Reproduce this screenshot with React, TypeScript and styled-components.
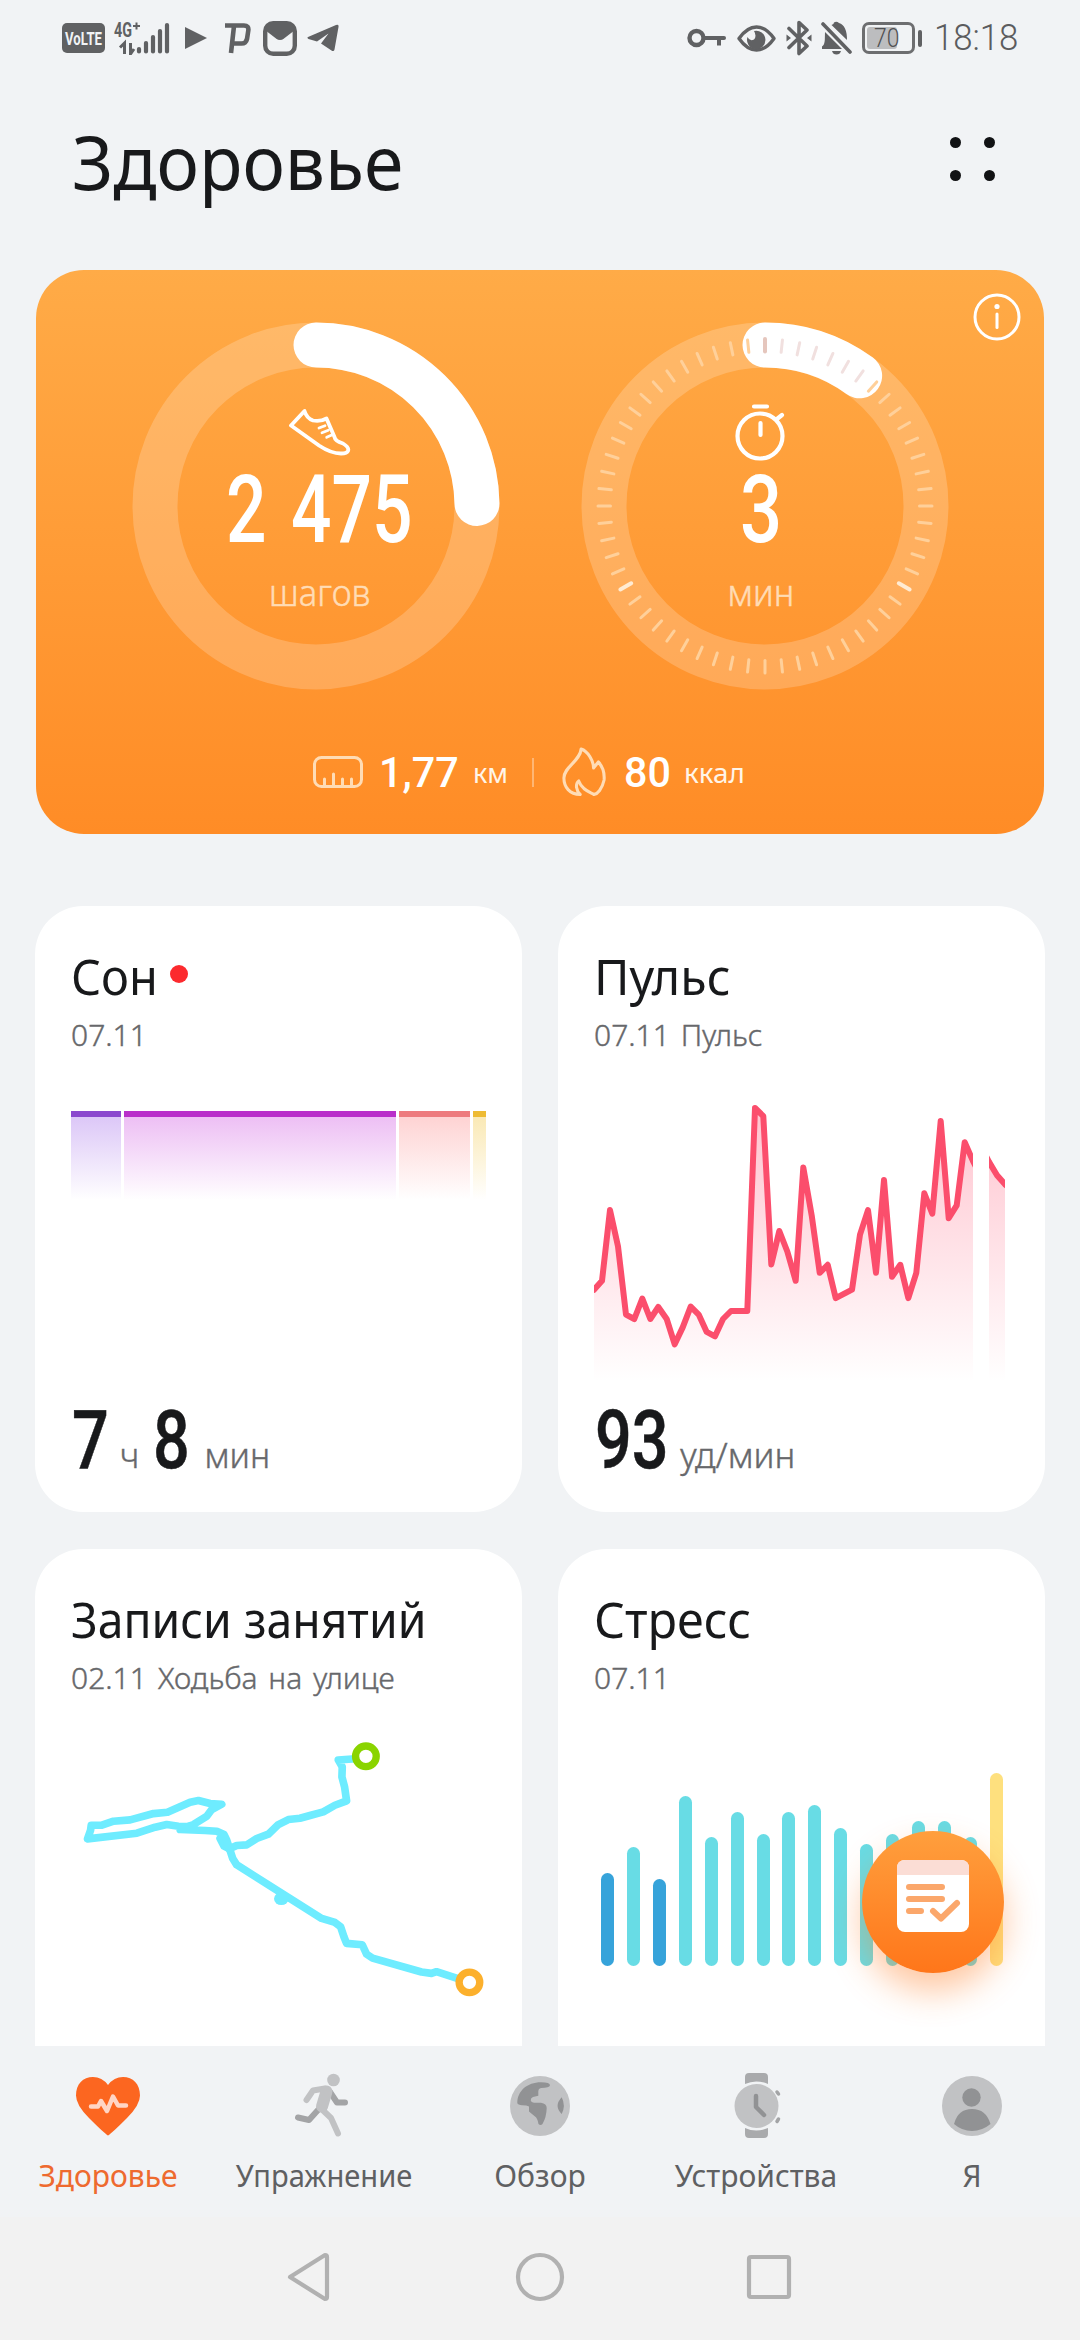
import React from "react";
import styled, { createGlobalStyle } from "styled-components";

const UI = '"Noto Sans", "Open Sans", sans-serif';
const NUM = 'Roboto, "Noto Sans", sans-serif';

const GlobalStyle = createGlobalStyle`
  * { box-sizing: border-box; }
  body { margin: 0; background: #f1f3f5; font-family: ${UI}; }
  svg { display: block; flex: none; }
`;

const Screen = styled.div`
  width: 1080px;
  height: 2340px;
  overflow: hidden;
  display: flex;
  flex-direction: column;
  background: #f1f3f5;
  position: relative;
`;

/* One line of text; s squeezes or widens the glyphs, bold thickens a light weight a little. */
const Text = styled.span<{
  size: number;
  color?: string;
  w?: number;
  s?: number;
  ws?: number;
  mr?: number;
  bold?: number;
  font?: string;
  origin?: string;
}>`
  display: block;
  white-space: pre;
  font-family: ${(p) => p.font ?? UI};
  font-size: ${(p) => p.size}px;
  font-weight: ${(p) => p.w ?? 400};
  line-height: 1;
  color: ${(p) => p.color ?? "#18191b"};
  word-spacing: ${(p) => p.ws ?? 0}px;
  margin-right: ${(p) => p.mr ?? 0}px;
  -webkit-text-stroke: ${(p) => p.bold ?? 0}px currentColor;
  transform: scaleX(${(p) => p.s ?? 1});
  transform-origin: ${(p) => p.origin ?? "left"} center;
`;

const StatusBar = styled.div`
  height: 76px;
  flex: none;
  display: flex;
  justify-content: space-between;
  align-items: flex-start;
  padding: 18px 59px 0 62px;
`;
const Group = styled.div`
  display: flex;
  align-items: center;
  height: 40px;
`;
const VoLte = styled.svg`
  border-radius: 5px;
  background: #606163;
`;
const Signal = styled.svg`
  margin-left: 8px;
`;
const Gap = styled.div<{ w: number }>`
  width: ${(p) => p.w}px;
  flex: none;
`;
const Battery = styled.div`
  width: 53px;
  height: 32px;
  border: 3px solid #6d6e70;
  border-radius: 7px;
  padding: 2px;
  display: flex;
`;
const BatteryLevel = styled.div`
  width: 30px;
  height: 22px;
  border-radius: 3px;
  background: #bcbdbf;
  display: flex;
  align-items: center;
  padding-left: 7px;
`;
const BatteryTip = styled.div`
  width: 4px;
  height: 17px;
  border-radius: 2px;
  margin-left: 3px;
  background: #606163;
`;

const Header = styled.header`
  height: 194px;
  flex: none;
  display: flex;
  justify-content: space-between;
  align-items: flex-start;
  padding: 49px 85px 0 72px;
`;
const Dots = styled.div`
  display: grid;
  grid-template-columns: 11px 11px;
  gap: 22px 23px;
  margin-top: 12px;
`;
const Dot = styled.i`
  width: 11px;
  height: 11px;
  border-radius: 50%;
  background: #111214;
`;

const Hero = styled.section`
  height: 564px;
  flex: none;
  margin: 0 36px;
  border-radius: 48px;
  background: linear-gradient(#ffab47, #ff8c26);
  position: relative;
  display: flex;
  flex-direction: column;
`;
const InfoButton = styled.div`
  position: absolute;
  top: 23px;
  right: 23px;
`;
const Rings = styled.div`
  display: flex;
  padding: 52px 0 0 96px;
  gap: 81px;
`;
const RingBox = styled.div`
  width: 368px;
  height: 368px;
  display: grid;
`;
const RingArt = styled.svg`
  grid-area: 1 / 1;
`;
const RingBody = styled.div<{ lead: number; trail: number }>`
  grid-area: 1 / 1;
  display: flex;
  flex-direction: column;
  align-items: center;
  padding: 0 ${(p) => p.trail}px 0 ${(p) => p.lead}px;
`;
const RingIcon = styled.div<{ lift: number }>`
  height: 58px;
  margin-top: 82px;
  padding-bottom: ${(p) => p.lift}px;
  display: flex;
  align-items: flex-end;
`;
const RingLabel = styled.div`
  margin-top: 18px;
`;
const Stats = styled.div`
  display: flex;
  height: 60px;
  margin-top: 52px;
  padding-left: 277px;
  align-items: center;
`;
const Rule = styled.div`
  width: 2px;
  height: 29px;
  background: rgba(255, 255, 255, 0.35);
  margin: 0 28px 0 24px;
`;

const Cards = styled.main`
  height: 1140px;
  flex: none;
  margin-top: 72px;
  padding: 0 35px;
  display: grid;
  grid-template-columns: 487px 487px;
  grid-auto-rows: 606px;
  gap: 37px 36px;
  overflow: hidden;
`;
const Card = styled.article`
  background: #fff;
  border-radius: 48px;
  padding: 0 36px;
  display: flex;
  flex-direction: column;
`;
const CardTitle = styled.div`
  height: 100px;
  padding-top: 45px;
  display: flex;
  gap: 7px;
`;
const RedDot = styled.i`
  width: 18px;
  height: 18px;
  border-radius: 50%;
  background: #fc2a2e;
  margin-top: 14px;
`;
const CardSub = styled.div`
  height: 84px;
  padding-top: 14px;
`;
const CardChart = styled.div`
  height: 308px;
  flex: none;
`;
const CardValue = styled.div`
  display: flex;
  align-items: baseline;
  height: 80px;
  padding: 2px 0 0 1px;
`;
const RouteBox = styled.div`
  margin-top: -6px;
`;
const SleepBar = styled.div`
  display: flex;
  gap: 3px;
  padding-top: 21px;
`;
const SleepStage = styled.div<{ w: number; line: string; fill: string }>`
  width: ${(p) => p.w}px;
  height: 89px;
  border-top: 6px solid ${(p) => p.line};
  background: linear-gradient(${(p) => p.fill}, #fff);
`;
const StressBars = styled.div`
  height: 233px;
  display: flex;
  align-items: flex-end;
  justify-content: space-between;
  padding: 0 6px 0 7px;
`;
const StressBar = styled.div<{ h: number; color: string }>`
  width: 13px;
  height: ${(p) => p.h}px;
  border-radius: 7px;
  background: ${(p) => p.color};
`;

const Fab = styled.button`
  position: absolute;
  left: 862px;
  top: 1831px;
  width: 142px;
  height: 142px;
  padding: 0 0 12px;
  border: 0;
  border-radius: 50%;
  background: linear-gradient(#ff9f3d, #ff761a);
  box-shadow: 0 18px 34px rgba(255, 122, 30, 0.42);
  display: flex;
  align-items: center;
  justify-content: center;
`;

const TabBar = styled.nav`
  height: 171px;
  flex: none;
  display: grid;
  grid-template-columns: repeat(5, 216px);
`;
const Tab = styled.div`
  display: flex;
  flex-direction: column;
  align-items: center;
  padding-top: 26px;
`;
const TabLabel = styled.div`
  margin-top: 23px;
`;
const SystemBar = styled.div`
  flex: 1;
  background: #f2f2f2;
  display: flex;
  justify-content: center;
  padding-top: 34px;
`;

const G = "#606163";

const StatusLeft = () => (
  <Group>
    <VoLte width="43" height="30" viewBox="0 0 43 30">
      <text x="3" y="22" fill="#f1f3f5" fontFamily="Roboto" fontWeight="700" fontSize="19" textLength="37" lengthAdjust="spacingAndGlyphs">VoLTE</text>
    </VoLte>
    <Signal width="58" height="34" viewBox="113 20 58 34" fill={G}>
      <text x="114" y="36" fontFamily="Roboto" fontWeight="700" fontSize="20" textLength="18" lengthAdjust="spacingAndGlyphs">4G</text>
      <path d="M133 25h7M136.500 21.500v7" stroke={G} strokeWidth="2" />
      <path d="M120 46.500L124.500 42V53M130.500 42V53L134 48" fill="none" stroke={G} strokeWidth="3" />
      <g stroke={G} strokeWidth="4.200" strokeLinecap="round">
        <path d="M139 48v2.500M146 42v8.500M153 36v14.500M160 30v20.500M167 24v26.500" />
      </g>
    </Signal>
    <Gap w={13} />
    <svg width="24" height="24" viewBox="0 0 24 24"><path d="M1 1L23 12L1 23Z" fill={G} /></svg>
    <Gap w={16} />
    <svg width="27" height="32" viewBox="0 0 27 32">
      <path d="M1 3.500H20Q25 3.500 24.300 8.500L23 17Q22 21.500 17.500 21.500H8.500M10 4L7 31" fill="none" stroke={G} strokeWidth="4.600" />
    </svg>
    <Gap w={12} />
    <svg width="34" height="35" viewBox="0 0 34 35">
      <rect x="2.200" y="2.200" width="29.600" height="30.600" rx="8" fill="none" stroke={G} strokeWidth="4.400" />
      <path d="M2 9L13 17.500Q17 20.500 21 17.500L32 9L28 2H6Z" fill={G} />
    </svg>
    <Gap w={10} />
    <svg width="32" height="28" viewBox="0 0 32 28">
      <path d="M1 13L29 1Q32 0 31.500 3L27.500 25.500Q27 28 24.500 26.500L14 19.500L21.500 9.500L10 17.500L1.500 15Q-.5 14 1 13Z" fill={G} />
    </svg>
  </Group>
);

const StatusRight = () => (
  <Group>
    <svg width="39" height="20" viewBox="0 0 39 20" fill="none" stroke={G}>
      <circle cx="9.500" cy="10" r="7" strokeWidth="4.400" />
      <path d="M17 10H37" strokeWidth="4" strokeLinecap="round" />
      <path d="M32 10V17.500" strokeWidth="4" />
    </svg>
    <Gap w={11} />
    <svg width="39" height="27" viewBox="0 0 39 27">
      <path d="M2 13.500Q10 2 19.500 2T37 13.500Q29 25 19.500 25T2 13.500Z" fill="none" stroke={G} strokeWidth="3.400" strokeLinejoin="round" />
      <path d="M17 6A9.200 9.200 0 1 1 10.500 12Q13 17 17 14.500Q20 11 17 6Z" fill={G} />
    </svg>
    <Gap w={10} />
    <svg width="26" height="36" viewBox="0 0 26 36">
      <path d="M3 8.500L21 26L13 33.500V2.500L21 10L3 27.500" fill="none" stroke={G} strokeWidth="3.600" strokeLinecap="round" strokeLinejoin="round" />
      <path d="M.5 14.500L5 18L.5 21.500ZM25.500 14.500L21 18L25.500 21.500Z" fill={G} />
    </svg>
    <Gap w={9} />
    <svg width="31" height="34" viewBox="0 0 31 34">
      <path d="M4 11L21 28H1V25.500Q3.500 24 3.800 19ZM10.500 4Q13 3 13 1.500Q15.500 0 18 2Q26 4.500 26 19L10.500 4ZM11 30h9q-1 3.500-4.500 3.500t-4.500-3.500Z" fill={G} />
      <path d="M2 3L29 31" stroke={G} strokeWidth="3.600" strokeLinecap="round" />
    </svg>
    <Gap w={10} />
    <Battery><BatteryLevel><Text size={26} w={300} font={NUM} color="#505153" s={0.88}>70</Text></BatteryLevel></Battery>
    <BatteryTip />
    <Gap w={12} />
    <Text size={36} w={300} font={NUM} color="#5b5c5e" s={0.965}>18:18</Text>
  </Group>
);

const R = 161;
const C = 184;
const arcEnd = (deg: number) => {
  const a = (deg * Math.PI) / 180;
  return `${C + R * Math.sin(a)} ${C - R * Math.cos(a)}`;
};

type RingProps = { sweep: number; ticks?: boolean; lead?: number; trail?: number; children: React.ReactNode };
const Ring = ({ sweep, ticks, lead = 0, trail = 0, children }: RingProps) => (
  <RingBox>
    <RingArt width="368" height="368" viewBox="0 0 368 368" fill="none">
      <circle cx={C} cy={C} r={R} stroke="#fff" strokeOpacity=".2" strokeWidth="45" />
      <path d={`M${C} ${C - R}A${R} ${R} 0 0 1 ${arcEnd(sweep)}`} stroke="#fff" strokeWidth="45" strokeLinecap="round" />
      {ticks &&
        Array.from({ length: 60 }, (_, i) => {
          const major = i % 20 === 0;
          const onArc = i * 6 <= sweep;
          return (
            <path
              key={i}
              d={`M${C} ${C - 154.5}V${C - 167}`}
              transform={`rotate(${i * 6} ${C} ${C})`}
              stroke={onArc ? (major ? "#e5c6bd" : "#f1e0df") : major ? "#ffebd3" : "#ffd09a"}
              strokeWidth={major ? 4 : 3}
              strokeLinecap="round"
            />
          );
        })}
    </RingArt>
    <RingBody lead={lead} trail={trail}>{children}</RingBody>
  </RingBox>
);

const Shoe = () => (
  <svg width="62" height="48" viewBox="0 0 62 48" fill="none" stroke="#fff" strokeWidth="3.800" strokeLinejoin="round" strokeLinecap="round">
    <path d="M15.500 2L2 16.500L30 36.500Q42 44.500 52 44.500Q58 44.500 59 42Q60.500 38.500 54 34.500Q46 32 45.500 28L37.500 9.500Q31 13 24 11.500Q17.500 9 15.500 2Z" />
    <path d="M30 19L36 16.700M33 23.700L39.300 21.300M37.700 28.300L42.700 26" strokeWidth="2.800" />
  </svg>
);
const Stopwatch = () => (
  <svg width="52" height="58" viewBox="0 0 52 58" fill="none" stroke="#fff" strokeWidth="4.200" strokeLinecap="round">
    <circle cx="25" cy="33" r="22.500" />
    <path d="M19 3.500H32M25.500 20V32M42 16L47 12" />
  </svg>
);
const Ruler = () => (
  <svg width="50" height="32" viewBox="0 0 50 32" fill="none" stroke="#ffdcb5" strokeWidth="3" strokeLinecap="round">
    <rect x="1.500" y="1.500" width="47" height="29" rx="7" />
    <path d="M11.500 30V23M20.500 30V18M29.500 30V23M38.500 30V23" />
  </svg>
);
const Flame = () => (
  <svg width="44" height="50" viewBox="0 0 46 50" preserveAspectRatio="none" fill="none" stroke="#ffdcb5" strokeWidth="3.200" strokeLinejoin="round" strokeLinecap="round">
    <path d="M19 47.500C8 47.500 2 40 2 31C2 20 19 14 20 2C27 4 33 14 33 21L38 15C43 20 44.500 27 44 33C42 42 37 47 33.500 47.500C29 45 21 43 17.500 34C13.500 37 15 44 19 47.500Z" />
  </svg>
);

const pulseA: [number, number][] = [
  [0, 199.7], [8, 190.8], [16, 120.1], [24, 156.3], [32, 224.6], [40.3, 229], [48.3, 208.5], [56.3, 229], [64.3, 217],
  [72.7, 229], [80.7, 254.3], [88.7, 237.4], [96.7, 216.6], [104.7, 224.6], [112.7, 241.9], [121, 246.3], [129, 229],
  [137, 221], [153.3, 221], [161, 18], [169.3, 26.1], [177.3, 174.4], [185.3, 141], [193.3, 161.5], [201.7, 190.8],
  [209.3, 77.5], [217.7, 125.4], [225.7, 182.8], [233.7, 174.8], [241.7, 208.1], [258, 199.7], [266, 144.6],
  [274, 120.1], [282, 182.8], [290, 90], [298, 186.8], [306.3, 174.8], [314.3, 208.1], [322.3, 182.8], [330.3, 103.3],
  [338.3, 123.7], [346.7, 30.9], [354.7, 128.2], [362.7, 115.3], [370.7, 52.2], [379, 71.1], [382, 77],
];
const pulseB: [number, number][] = [[392, 66], [395, 71.9], [403, 85.2], [411, 94.4], [414, 97]];
const toPath = (pts: [number, number][]) => "M" + pts.map((p) => p.join(" ")).join("L");

const PulseChart = () => (
  <svg width="411" height="296" viewBox="0 0 411 296">
    <defs>
      <linearGradient id="pulseFill" gradientUnits="userSpaceOnUse" x1="0" y1="20" x2="0" y2="292">
        <stop offset="0" stopColor="#ff5070" stopOpacity=".34" />
        <stop offset="1" stopColor="#ff5070" stopOpacity="0" />
      </linearGradient>
      <clipPath id="pulseClip"><path d="M0 0H379V296H0ZM395 0H411V296H395Z" /></clipPath>
    </defs>
    <g clipPath="url(#pulseClip)">
      {[pulseA, pulseB].map((p, i) => (
        <g key={i}>
          <path d={`${toPath(p)}V292H${p[0][0]}Z`} fill="url(#pulseFill)" />
          <path d={toPath(p)} fill="none" stroke="#fb4e6c" strokeWidth="6" strokeLinejoin="round" strokeLinecap="round" />
        </g>
      ))}
    </g>
  </svg>
);

const RouteMap = () => (
  <svg width="420" height="283" viewBox="123 560 1260 850" fill="none" strokeLinejoin="round" strokeLinecap="round">
    <g stroke="#6eecff" strokeWidth="23">
      <path d="M1008 653L925 659L937 680L936 710L944 740L950 782L915 795L880 815L840 826L810 834L775 838L745 853L715 882L680 895L650 914L620 916L598 926" />
      <path d="M598 926L582 918L570 895" />
      <path d="M1318 1327L1280 1314L1220 1295L1205 1300L1175 1296L1028 1254L1010 1242L997 1214L950 1210L942 1190L932 1160L915 1147L875 1135L780 1075L620 974L608 955L590 900L582 883L560 873L525 871L450 868L490 853L530 828L545 808L575 792L540 790L505 781L480 786L412 816L370 820L300 839L250 843L215 855L183 855L181 870L172 896L320 879L375 861L410 853L445 858L490 860" />
    </g>
    <ellipse cx="754" cy="1076" rx="22" ry="19" fill="#6eecff" />
    <circle cx="1008" cy="648" r="31" fill="#fff" stroke="#8ad400" strokeWidth="22" />
    <circle cx="1319" cy="1327" r="31" fill="#fff" stroke="#fcb02c" strokeWidth="22" />
  </svg>
);

const stress = [93, 119, 87, 170, 129, 154, 132, 154, 161, 138, 122, 132, 145, 145, 129, 193];
const stressColor = (h: number) => (h < 100 ? "#36a3da" : h > 180 ? "#fee07e" : "#68dce5");

const FabIcon = () => (
  <svg width="72" height="72" viewBox="0 0 72 72" fill="none" stroke="#fba76b" strokeWidth="6" strokeLinecap="round" strokeLinejoin="round">
    <rect width="72" height="72" rx="8" fill="#fff" stroke="none" />
    <path d="M0 15V8Q0 0 8 0H64Q72 0 72 8V15Z" fill="#fbddd5" stroke="none" />
    <path d="M12 27H45M12 39H45M12 51H24M36 51L44 58.500L60 43" />
  </svg>
);

const HeartIcon = () => (
  <svg width="66" height="66" viewBox="0 0 66 66">
    <path d="M33 63.500Q30 62 14 46Q1 33 1 23.500C1 12 8 5 18 5Q27 5 33 13Q39 5 48 5C58 5 65 12 65 23.500Q65 33 52 46Q36 62 33 63.500Z" fill="#fc6620" />
    <path d="M16 34.500H23L26 29L32 39L38 24.500L43 33.500H51" fill="none" stroke="#ffd5c5" strokeWidth="4.500" strokeLinecap="round" strokeLinejoin="round" />
  </svg>
);
const RunIcon = () => (
  <svg width="66" height="66" viewBox="0 0 66 66" fill="none" strokeLinecap="round" strokeLinejoin="round">
    <path d="M39 20L46 30.500L54 30.500M27 38L18 48L7 45.500" stroke="#a3a4a6" strokeWidth="6" />
    <circle cx="42.500" cy="8" r="6.300" fill="#c1c2c4" />
    <path d="M15.500 28L22 18.500L34 16.500" stroke="#c1c2c4" strokeWidth="6" />
    <path d="M35.500 19.500L31 34.500" stroke="#c1c2c4" strokeWidth="12" />
    <path d="M29.500 36L40 46L47 61.500" stroke="#c1c2c4" strokeWidth="6" />
  </svg>
);
const GlobeIcon = () => (
  <svg width="66" height="66" viewBox="0 0 66 66">
    <circle cx="33" cy="34" r="30" fill="#c1c2c4" />
    <path d="M10.300 31C10.500 19 20 10.300 34 10.300Q43 10.500 43 13.200Q42.500 15.800 34 16Q31.300 16.500 31.300 19V23.700L26 25Q23.700 26 23.700 28.200Q24 30.300 27 30.700H34Q39.700 31.500 39.700 36Q39.500 45 35.500 52Q33.500 54 31.500 52Q30.500 46 28 44.500L22 39.500V34.500Q20 33.300 15 33.300Q11 33 10.300 31ZM54.700 25.300Q59 33.700 54.700 42Q46.500 34 54.700 25.300Z" fill="#919294" />
  </svg>
);
const WatchIcon = () => (
  <svg width="66" height="66" viewBox="0 0 66 66">
    <path d="M22 12V5Q22 1 26 1H41Q45 1 45 5V12Q33 7 22 12ZM22 56V62Q22 66 26 66H41Q45 66 45 62V56Q33 61 22 56Z" fill="#a9aaac" />
    <circle cx="33.500" cy="34" r="22" fill="#c1c2c4" />
    <path d="M33 24V35L41 43" fill="none" stroke="#919294" strokeWidth="4.500" strokeLinecap="round" strokeLinejoin="round" />
    <path d="M54 20L55.500 22M55.500 47L54 49.500" stroke="#a3a4a6" strokeWidth="3.500" strokeLinecap="round" />
  </svg>
);
const PersonIcon = () => (
  <svg width="66" height="66" viewBox="0 0 66 66">
    <circle cx="33" cy="34" r="30" fill="#c1c2c4" />
    <circle cx="32.500" cy="25.500" r="9.200" fill="#919294" />
    <path d="M15 52Q19 37 33 37T51.500 52Q43 59 33 59T15 52Z" fill="#919294" />
  </svg>
);

const tabs = [
  { label: "Здоровье", icon: <HeartIcon />, active: true, s: 1 },
  { label: "Упражнение", icon: <RunIcon />, s: 0.97 },
  { label: "Обзор", icon: <GlobeIcon />, s: 1 },
  { label: "Устройства", icon: <WatchIcon />, s: 1 },
  { label: "Я", icon: <PersonIcon />, s: 1 },
];

const Sub = ({ children }: { children: string }) => (
  <CardSub><Text size={30} w={300} bold={0.4} ws={3} color="#67686b">{children}</Text></CardSub>
);
const Value = ({ children, mr }: { children: string; mr?: number }) => (
  <Text size={81} w={500} bold={0.5} font={NUM} s={0.8} mr={mr}>{children}</Text>
);
const Unit = ({ children, s }: { children: string; s?: number }) => (
  <Text size={34} w={300} bold={0.4} s={s} color="#67686b">{children}</Text>
);
const RingUnit = ({ children }: { children: string }) => (
  <RingLabel>
    <Text size={36} w={300} bold={0.5} s={0.96} color="#ffdcb5" origin="center">{children}</Text>
  </RingLabel>
);

export default function App() {
  return (
    <Screen>
      <GlobalStyle />
      <StatusBar><StatusLeft /><StatusRight /></StatusBar>
      <Header>
        <Text size={74} s={0.965}>Здоровье</Text>
        <Dots><Dot /><Dot /><Dot /><Dot /></Dots>
      </Header>

      <Hero>
        <InfoButton>
          <svg width="48" height="48" viewBox="0 0 48 48" fill="none" stroke="#fff" strokeWidth="3">
            <circle cx="24" cy="24" r="22" />
            <path d="M24 21V34.500" strokeLinecap="round" />
            <circle cx="24" cy="13.500" r="2.600" fill="#fff" stroke="none" />
          </svg>
        </InfoButton>
        <Rings>
          <Ring sweep={89.1} lead={7}>
            <RingIcon lift={5}><Shoe /></RingIcon>
            <Text size={95} w={500} font={NUM} color="#fff" s={0.75} ws={9} origin="center">2 475</Text>
            <RingUnit>шагов</RingUnit>
          </Ring>
          <Ring sweep={36} ticks trail={8}>
            <RingIcon lift={1}><Stopwatch /></RingIcon>
            <Text size={95} w={500} font={NUM} color="#fff" s={0.78} origin="center">3</Text>
            <RingUnit>мин</RingUnit>
          </Ring>
        </Rings>
        <Stats>
          <Ruler />
          <Gap w={16} />
          <Text size={43} w={500} s={0.96} font={NUM} color="#fff">1,77</Text>
          <Gap w={11} />
          <Text size={27} color="#fff5e8">км</Text>
          <Rule />
          <Flame />
          <Gap w={18} />
          <Text size={43} w={500} s={0.96} font={NUM} color="#fff">80</Text>
          <Gap w={11} />
          <Text size={27} s={1.03} color="#fff5e8">ккал</Text>
        </Stats>
      </Hero>

      <Cards>
        <Card>
          <CardTitle><Text size={50} s={0.94}>Сон</Text><RedDot /></CardTitle>
          <Sub>07.11</Sub>
          <CardChart>
            <SleepBar>
              <SleepStage w={50} line="#8b48ce" fill="#dcc7f7" />
              <SleepStage w={272} line="#b92fca" fill="#edbff4" />
              <SleepStage w={71} line="#ed7b7e" fill="#fed3d3" />
              <SleepStage w={13} line="#eebb33" fill="#fae9b5" />
            </SleepBar>
          </CardChart>
          <CardValue>
            <Value mr={2}>7</Value>
            <Unit>ч</Unit>
            <Gap w={14} />
            <Value mr={5}>8</Value>
            <Unit>мин</Unit>
          </CardValue>
        </Card>
        <Card>
          <CardTitle><Text size={50} s={0.97}>Пульс</Text></CardTitle>
          <Sub>07.11 Пульс</Sub>
          <CardChart><PulseChart /></CardChart>
          <CardValue>
            <Value mr={-7}>93</Value>
            <Unit s={1.03}>уд/мин</Unit>
          </CardValue>
        </Card>
        <Card>
          <CardTitle><Text size={50} s={0.926}>Записи занятий</Text></CardTitle>
          <Sub>02.11 Ходьба на улице</Sub>
          <RouteBox><RouteMap /></RouteBox>
        </Card>
        <Card>
          <CardTitle><Text size={50} s={0.97}>Стресс</Text></CardTitle>
          <Sub>07.11</Sub>
          <StressBars>
            {stress.map((h, i) => <StressBar key={i} h={h} color={stressColor(h)} />)}
          </StressBars>
        </Card>
      </Cards>

      <Fab><FabIcon /></Fab>

      <TabBar>
        {tabs.map((t) => (
          <Tab key={t.label}>
            {t.icon}
            <TabLabel>
              <Text size={30} color={t.active ? "#ee6a2f" : "#5f6062"} s={t.s} origin="center">{t.label}</Text>
            </TabLabel>
          </Tab>
        ))}
      </TabBar>
      <SystemBar>
        <svg width="506" height="52" viewBox="287 2251 506 52" fill="none" stroke="#b1b1b1" strokeWidth="4.200" strokeLinejoin="round">
          <path d="M290 2277L325 2255Q327 2255 327 2257V2297Q327 2299 325 2299Z" />
          <circle cx="540" cy="2277" r="22" />
          <rect x="749" y="2257" width="40" height="40" rx="2" />
        </svg>
      </SystemBar>
    </Screen>
  );
}
